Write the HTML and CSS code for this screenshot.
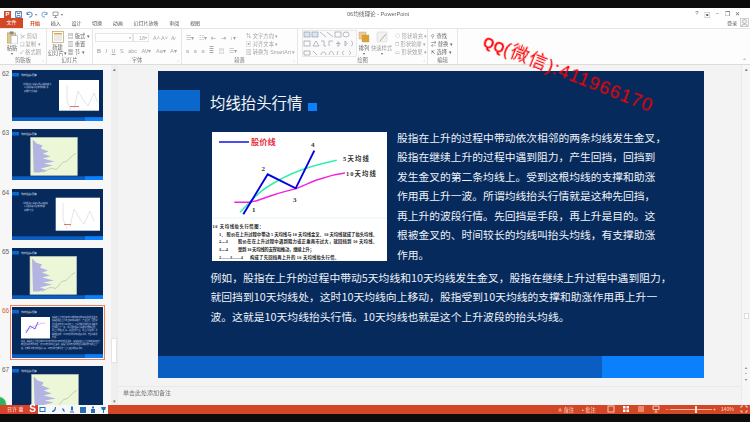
FILE: index.html
```html
<!DOCTYPE html>
<html lang="zh-CN">
<head>
<meta charset="utf-8">
<title>06均线理论 - PowerPoint</title>
<link rel="stylesheet" href="styles.css">
</head>
<body>
<svg class="defs" width="0" height="0">
  <defs>
    <g id="base">
      <rect width="91" height="51" fill="#072a5c"/>
      <rect y="3" width="7" height="3.5" fill="#0a68cc"/>
      <rect y="47.3" width="91" height="3.7" fill="#0a5ec2"/>
      <rect x="73" y="47.3" width="18" height="3.7" fill="#0a80fb"/>
      <text x="9" y="6" class="th-title">均线抬头行情</text>
      <rect x="20.5" y="4.6" width="1" height="1" fill="#0a80fb"/>
    </g>
    <g id="fan">
      <rect width="46.6" height="38" fill="#ecf7d8" stroke="#c4c4c4" stroke-width=".6"/>
      <path d="M2 2 3 35 9 35 16 33 10 31 22 28 13 26 24 24 12 21 20 19 12 16 18 14 10 11 12 8 6 6Z" fill="#b4b4e2"/>
      <path d="M12 35 20 31 26 32 32 25 36 24 42 18 45 16" fill="none" stroke="#b4bcaa" stroke-width=".7"/>
    </g>
    <g id="peaks">
      <path d="M5 4V20L9 30M12 28 16 10 22 20 26 25 32 12 36 22" fill="none" stroke="#c8c8c8" stroke-width=".5"/>
    </g>
  </defs>
</svg>

<div class="black"></div>
<div class="window">
  <header class="titlebar">
    <div class="qat">
      <span class="ppt">P</span>
      <svg class="qi" viewBox="0 0 7 7"><path d="M.5.5h6v6h-6zM2 .5v2h3v-2M2 6.5v-2h3v2" fill="none" stroke="#4a6fa5" stroke-width=".8"/></svg>
      <svg class="qi" viewBox="0 0 7 7"><path d="M1 1v2.500h2.500M1.200 3.300A2.500 2.500 0 1 1 3 6" fill="none" stroke="#3b78c4" stroke-width=".9"/></svg>
      <span class="qd">▾</span>
      <svg class="qi" viewBox="0 0 7 7"><path d="M6 1v2.500h-2.500M5.800 3.300A2.500 2.500 0 1 0 4 6" fill="none" stroke="#6b9bc9" stroke-width=".9"/></svg>
      <svg class="qi" viewBox="0 0 7 7"><path d="M1 1h5v3.500h-5zM3.500 4.500v2M2 6.500h3" fill="none" stroke="#8a8a8a" stroke-width=".8"/></svg>
      <span class="qd">▾</span>
    </div>
    <div class="doc">06均线理论 - PowerPoint</div>
    <div class="winctl"><span>?</span><span>▣</span><span>–</span><span>❐</span><span>✕</span></div>
  </header>
  <nav class="tabs">
    <span class="file">文件</span>
    <span class="tab t1 active">开始</span>
    <span class="tab">插入</span>
    <span class="tab">设计</span>
    <span class="tab">切换</span>
    <span class="tab">动画</span>
    <span class="tab">幻灯片放映</span>
    <span class="tab">审阅</span>
    <span class="tab">视图</span>
    <span class="login">登录</span>
    <svg class="avatar" viewBox="0 0 9 9"><rect x=".5" y=".5" width="8" height="8" fill="#f4f4f4" stroke="#aaa" stroke-width=".5"/><path d="M1.500 8.500c0-3 6-3 6 0M4.500 1.500a1.800 2 0 1 0 .01 0" fill="none" stroke="#888" stroke-width=".6"/></svg>
  </nav>

  <section class="ribbon">
    <div class="grp g-clip">
      <div class="grp-body">
        <div class="big">
          <svg class="bigicon" viewBox="0 0 12 14"><rect x="1" y="2" width="9" height="11" fill="#e0c98c" stroke="#a98b4a" stroke-width=".5"/><rect x="3.500" y=".5" width="4" height="3" fill="#888"/><rect x="5" y="5" width="7" height="9" fill="#fff" stroke="#7a9cc6" stroke-width=".5"/></svg>
          <span>粘贴</span><span class="dd">▾</span>
        </div>
        <div class="rows">
          <span class="muted">✂ 剪切</span>
          <span class="muted">❏ 复制 ▾</span>
          <span class="muted">✓ 格式刷</span>
        </div>
      </div>
      <div class="grp-label">剪贴板<i>⌟</i></div>
    </div>
    <div class="grp g-slides">
      <div class="grp-body">
        <div class="big big-new">
          <svg class="bigicon" viewBox="0 0 12 12"><rect x=".5" y=".5" width="11" height="11" fill="#fff" stroke="#b58d3c" stroke-width=".6"/><rect x="2" y="2" width="8" height="1.500" fill="#d8a94e"/><path d="M2 5h8M2 7h8M2 9h8" stroke="#bbb" stroke-width=".6"/></svg>
          <span>新建</span><span>幻灯片▾</span>
        </div>
        <div class="rows rows-slide">
          <span>▤ 版式 ▾</span>
          <span>▥ 重置</span>
          <span>▦ 节 ▾</span>
        </div>
      </div>
      <div class="grp-label">幻灯片</div>
    </div>
    <div class="grp g-font">
      <div class="grp-body col">
        <div class="line">
          <span class="box fontbox"><i>▾</i></span><span class="box sizebox">18 <i>▾</i></span>
          <span class="muted glyphs">A˄ A˅ &nbsp;A̷</span>
        </div>
        <div class="line muted glyphs"><b>B</b><em>I</em><u>U</u><span>S</span><span>abc</span><span>AV▾</span><span>Aa▾</span><span>A▾</span></div>
      </div>
      <div class="grp-label">字体<i>⌟</i></div>
    </div>
    <div class="grp g-para">
      <div class="grp-body">
        <div class="col pcol">
          <div class="line muted glyphs"><span>☰▾</span><span>☷▾</span><span>⇤</span><span>⇥</span><span>↕▾</span></div>
          <div class="line muted glyphs"><span>≡</span><span>≡</span><span>≡</span><span>≣</span><span>▤</span><span>☰▾</span></div>
        </div>
        <div class="rows muted">
          <span>⇅ 文字方向 ▾</span>
          <span>▣ 对齐文本 ▾</span>
          <span>▧ 转换为 SmartArt ▾</span>
        </div>
      </div>
      <div class="grp-label">段落<i>⌟</i></div>
    </div>
    <div class="grp g-draw">
      <div class="grp-body">
        <svg class="gallery" viewBox="0 0 55 27">
          <g fill="none" stroke="#8a8f99" stroke-width=".6">
            <rect x=".5" y=".5" width="54" height="26" fill="#fafafa" stroke="#ddd"/>
            <rect x="2" y="2" width="6" height="5" fill="#dbe6f4"/><rect x="10" y="2" width="6" height="5" fill="#dbe6f4"/>
            <path d="M18 2l6 5M25 2l6 5"/><rect x="33" y="2" width="6" height="5"/><ellipse cx="44" cy="4.500" rx="3" ry="2.500"/>
            <rect x="2" y="11" width="6" height="5"/><path d="M11 16l3-5 3 5zM19 11h3v5h2M27 16v-5h4M34 13.500h4l-2-2v5l2-2M43 11v5l2-2.500zM49 11c2 0 2 5 0 5"/>
            <path d="M2 21h6v4H2zM11 21l4 4M19 25c0-4 5-4 5 0M27 25c1-5 3-5 5 0M36 21l-1 4M42 21c-2 1-2 3 0 4M47 21c2 1 2 3 0 4"/>
          </g>
        </svg>
        <div class="big bignarrow">
          <svg class="bigicon short" viewBox="0 0 12 12"><rect x="1" y="1" width="7" height="7" fill="#eccf8d" stroke="#b98" stroke-width=".4"/><rect x="4" y="4" width="7" height="7" fill="#e0a030" stroke="#b98" stroke-width=".4"/></svg>
          <span>排列</span><span class="dd">▾</span>
        </div>
        <div class="big bignarrow2">
          <svg class="bigicon short" viewBox="0 0 12 12"><rect x="1" y="1" width="10" height="10" rx="1" fill="#f2f2f2" stroke="#ccc" stroke-width=".5"/><path d="M4 10 10 3" stroke="#aaa"/></svg>
          <span class="muted">快速样式</span><span class="dd">▾</span>
        </div>
        <div class="rows muted rows-shape">
          <span>◇ 形状填充 ▾</span>
          <span>☐ 形状轮廓 ▾</span>
          <span>▭ 形状效果 ▾</span>
        </div>
      </div>
      <div class="grp-label">绘图<i>⌟</i></div>
    </div>
    <div class="grp g-edit">
      <div class="grp-body">
        <div class="rows">
          <span>⚲ 查找</span>
          <span>⇄ 替换 ▾</span>
          <span>⇱ 选择 ▾</span>
        </div>
      </div>
      <div class="grp-label">编辑</div>
    </div>
    <div class="collapse">⌃</div>
  </section>

  <main class="work">
    <aside class="pane">
      <div class="thumbs">
        <div class="thumb"><span class="num">62</span>
          <svg class="mini" viewBox="0 0 91 51"><use href="#base"/><g class="ttxt"><text x="11" y="14.500">均线抬头行情指标的运用说明文字</text><text x="12" y="18">以及相关股价走势的简要分析</text><text x="12" y="21.500">和操作方法说明</text></g><rect x="47" y="10" width="40" height="30.700" fill="#fff"/><g transform="translate(50 11)"><use href="#peaks"/></g><rect x="58" y="36" width="9" height="1" fill="#d77"/></svg>
        </div>
        <div class="thumb"><span class="num">63</span>
          <svg class="mini" viewBox="0 0 91 51"><use href="#base"/><g transform="translate(18.700 8.400)"><use href="#fan"/></g></svg>
        </div>
        <div class="thumb"><span class="num">64</span>
          <svg class="mini" viewBox="0 0 91 51"><use href="#base"/><g class="ttxt"><text x="11" y="14.500">均线抬头行情指标的运用说明</text><text x="12" y="18">以及相关股价走势的简要</text><text x="12" y="21.500">和操作方法</text></g><rect x="43.700" y="8.700" width="44.300" height="33" fill="#fff"/><g transform="translate(46 10)"><use href="#peaks"/></g><rect x="52" y="35" width="7" height="1" fill="#d77"/></svg>
        </div>
        <div class="thumb"><span class="num">65</span>
          <svg class="mini" viewBox="0 0 91 51"><use href="#base"/><g transform="translate(18 8.400)"><use href="#fan"/></g></svg>
        </div>
        <div class="thumb selected"><span class="num">66</span>
          <svg class="mini" viewBox="0 0 91 51"><use href="#base"/><rect x="9" y="10" width="29" height="21.500" fill="#fff"/><path d="M14 26 18 19 23 22 26 15" fill="none" stroke="#00f" stroke-width=".6"/><path d="M13 24c6-3 14-8 20-8" fill="none" stroke="#d3d" stroke-width=".4"/><g class="ttxt"><text x="40" y="11">股指在上升的过程中带动依次相邻的两条均线发生金叉，</text><text x="40" y="14.300">股指在继续上升的过程中遇到阻力，产生回挡，回挡到</text><text x="40" y="17.600">发生金叉的第二条均线上。受到这根均线的支撑和助涨</text><text x="40" y="20.900">作用再上升一波。所谓均线抬头行情就是这种先回挡，</text><text x="40" y="24.200">再上升的波段行情。先回挡是手段，再上升是目的。这</text><text x="40" y="27.500">根被金叉的、时间较长的均线叫抬头均线，有支撑助涨</text><text x="40" y="30.800">作用。</text><text x="9" y="35">例如，股指在上升的过程中带动5天均线和10天均线发生金叉，股指在继续上升过程中遇到阻力，</text><text x="9" y="38.300">就回挡到10天均线处，这时10天均线向上移动，股指受到10天均线的支撑和助涨作用再上升一</text><text x="9" y="41.600">波。这就是10天均线抬头行情。10天均线也就是这个上升波段的抬头均线。</text></g></svg>
        </div>
        <div class="thumb"><span class="num">67</span>
          <svg class="mini" viewBox="0 0 91 51"><use href="#base"/><g transform="translate(19.700 8.400)"><use href="#fan"/></g></svg>
        </div>
      </div>
      <div class="pscroll">
        <span class="sarrow">▴</span>
        <span class="sthumb"></span>
        <span class="sarrow">▾</span>
      </div>
    </aside>

    <div class="editor">
      <div class="canvas">
        <article class="slide">
          <div class="s-head">
            <span class="s-tag"></span>
            <h1 class="s-title">均线抬头行情</h1>
            <span class="s-dot"></span>
          </div>
          <div class="s-row">
            <figure class="chart">
              <svg class="chart-svg" viewBox="0 0 175 129">
                <rect width="175" height="129" fill="#fff"/>
                <path d="M0 86H175" stroke="#e0f6f4" stroke-width="1"/>
                <path d="M7 10H37" stroke="#0000e0" stroke-width="1.400"/>
                <text x="39" y="12.500" class="c-red">股价线</text>
                <path d="M28 80.300C38 70 46 60 56 54.500 68 47 78 42 88 38.500 100 34 112 31 124.700 28.300" fill="none" stroke="#33f0a8" stroke-width="1.500"/>
                <path d="M22.300 70.300H38C46 69 54 65 61.300 63 70 60 76 59 84.700 56.300 94 53 100 49 108 47 116 44 124 42 133 41" fill="none" stroke="#f022e0" stroke-width="1.400"/>
                <path d="M31.300 82.300 55.700 42.300 83.700 56.300 102.300 18.700" fill="none" stroke="#0000e6" stroke-width="1.900"/>
                <g class="c-lab">
                  <text x="99" y="15">4</text><text x="49.500" y="39">2</text><text x="81" y="69.500">3</text><text x="40" y="79.500">1</text>
                  <text x="131" y="29" class="c-name" textLength="26">5天均线</text><text x="134" y="44" class="c-name" textLength="30">10天均线</text>
                </g>
                <g class="c-note">
                  <text x=".5" y="95.500" textLength="51">10 天均线抬头行情图：</text>
                  <text x="7" y="103.500" textLength="158">1、 股价在上升过程中带动 5 天均线与 10 天均线金叉。10 天均线就成了抬头均线。</text>
                  <text x="7" y="111" textLength="9">2——3</text>
                  <text x="26" y="111" textLength="139">股价在在上升过程中遇到阻力或正乘南市过大，就回挡到 10 天均线。</text>
                  <text x="7" y="118.500" textLength="9">3——4</text>
                  <text x="26" y="118.500" textLength="76">受到 10 天均线的支撑和推动，继续上升；</text>
                  <text x="7" y="126.500" textLength="24">2——3——4</text>
                  <text x="38" y="126.500" textLength="89">构成了先回挡再上升的 10 天均线抬头行情。</text>
                </g>
              </svg>
            </figure>
            <p class="s-side">股指在上升的过程中带动依次相邻的两条均线发生金叉<span class="cm">，</span><br>股指在继续上升的过程中遇到阻力<span class="cm">，</span>产生回挡<span class="cm">，</span>回挡到<br>发生金叉的第二条均线上。受到这根均线的支撑和助涨<br>作用再上升一波。所谓均线抬头行情就是这种先回挡<span class="cm">，</span><br>再上升的波段行情。先回挡是手段<span class="cm">，</span>再上升是目的。这<br>根被金叉的、时间较长的均线叫抬头均线<span class="cm">，</span>有支撑助涨<br>作用。</p>
          </div>
          <p class="s-para">例如<span class="cm">，</span>股指在上升的过程中带动5天均线和10天均线发生金叉<span class="cm">，</span>股指在继续上升过程中遇到阻力<span class="cm">，</span><br>就回挡到10天均线处<span class="cm">，</span>这时10天均线向上移动<span class="cm">，</span>股指受到10天均线的支撑和助涨作用再上升一<br>波。这就是10天均线抬头行情。10天均线也就是这个上升波段的抬头均线。</p>
          <div class="s-foot"><span class="s-foot-b"></span></div>
        </article>
      </div>
      <div class="notes">单击此处添加备注</div>
    </div>

    <div class="rscroll">
      <span class="sarrow">▴</span>
      <span class="rthumb"></span>
      <span class="rbtns">▴<br>▪<br>▾</span>
    </div>
  </main>

  <footer class="status">
    <span>≜ 备注</span>
    <span class="st-gap">▪ 批注</span>
    <svg class="st-ic first" viewBox="0 0 8 8"><rect x="1" y="1" width="6" height="6" fill="none" stroke="#f4c9b8"/></svg>
    <svg class="st-ic" viewBox="0 0 8 8"><path d="M1 1h2.500v2.500H1zM4.500 1H7v2.500H4.500zM1 4.500h2.500V7H1zM4.500 4.500H7V7H4.500z" fill="#fff"/></svg>
    <svg class="st-ic" viewBox="0 0 8 8"><rect x="1" y="1" width="6" height="6" fill="#e88a6c"/></svg>
    <svg class="st-ic" viewBox="0 0 8 8"><path d="M1 1h6v3.500H1zM4 4.500V7M2.500 7h3" fill="none" stroke="#f4c9b8"/></svg>
    <span class="slider"><i>–</i><span class="track"><b></b></span><i>+</i></span>
    <span class="zoom">140%</span>
    <svg class="st-ic fit" viewBox="0 0 8 8"><path d="M1 3V1h2M5 1h2v2M7 5v2H5M3 7H1V5" fill="none" stroke="#f4c9b8"/></svg>
  </footer>
</div>
<div class="black"></div>

<div class="watermark"><b class="wm-q">QQ</b>(微信):411966170</div>
<div class="ime">
  <span class="ime-ball"></span>
  <span class="ime-red">日许 重 <b>S</b></span>
  <span class="ime-tools">
    <svg viewBox="0 0 70 8"><g fill="#2a6fb5"><rect x="2" y="1.500" width="5" height="4" fill="none" stroke="#2a6fb5"/><path d="M14 6c3 0 4-2 4-5l-1 0c0 2-1 3-3 4zM24 2l2 1 1 3-2-1zM33 .5h2v4h-2zM32 5.500h4v1h-4zM42 1h6v6h-6zM53 3h4v4h-4zM54 .5h2v2h-2zM63 1h5l-1 3h-1v3h-1V4h-1z"/></g></svg>
  </span>
</div>
</body>
</html>
```

FILE: styles.css
```css
* { box-sizing: border-box; }
html, body { margin: 0; padding: 0; }
body {
  width: 750px;
  height: 422px;
  overflow: hidden;
  position: relative;
  display: flex;
  flex-direction: column;
  background: #0c0c0c;
  font-family: "Liberation Sans", "Noto Sans CJK SC", sans-serif;
  color: #444;
}
.defs { position: absolute; }
.black { height: 8px; flex: none; background: #0c0c0c; }
.window { flex: none; height: 405.500px; display: flex; flex-direction: column; background: #f3f3f3; }

/* title bar */
.titlebar { height: 10px; flex: none; display: flex; align-items: center; padding: 2px 4px 0; background: #fff; position: relative; filter: blur(.25px); }
.qat { display: flex; align-items: center; gap: 4px; width: 340px; }
.ppt { width: 7px; height: 7px; background: #d24726; color: #fff; font-size: 6px; line-height: 7px; text-align: center; font-weight: bold; }
.qi { width: 7px; height: 7px; }
.qd { font-size: 4px; color: #777; margin-left: -2px; }
.doc { width: 340px; font-size: 5.600px; color: #666; padding-left: 3px; }
.winctl { display: flex; gap: 5.500px; font-size: 6px; color: #666; margin-left: -10px; width: 66px; justify-content: flex-end; }

/* tabs */
.tabs { height: 9.500px; flex: none; display: flex; align-items: center; background: #fff; font-size: 5px; color: #555; position: relative; }
.file { width: 23px; height: 9.500px; line-height: 9.500px; text-align: center; background: #d24726; color: #fff; }
.tab { margin-left: 10.700px; white-space: nowrap; filter: blur(.25px); }
.tab.t1 { margin-left: 7px; }
.active { color: #d24726; font-weight: bold; }
.login { margin-left: auto; margin-right: 3px; }
.avatar { width: 9px; height: 9px; margin-right: 1px; }

/* ribbon */
.ribbon { height: 37px; flex: none; display: flex; background: #fdfdfd; border-top: 1px solid #e6e6e6; border-bottom: 1px solid #dcdcdc; font-size: 5.300px; color: #666; position: relative; filter: blur(.35px); }
.grp { display: flex; flex-direction: column; border-right: 1px solid #e6e6e6; flex: none; position: relative; }
.grp-body { flex: 1; display: flex; min-height: 0; }
.grp-label { height: 8px; line-height: 8px; text-align: center; color: #777; position: relative; }
.grp-label i { position: absolute; right: 2px; top: 0; font-style: normal; font-size: 4px; color: #aaa; }
.g-clip { width: 47px; }
.g-slides { width: 46px; }
.g-font { width: 89px; }
.g-para { width: 116px; }
.g-draw { width: 130px; }
.g-edit { width: 30px; }
.big { display: flex; flex-direction: column; align-items: center; line-height: 6px; padding: 2px 0 0 4px; width: 20px; white-space: nowrap; flex: none; }
.big .dd { font-size: 4px; line-height: 5px; }
.big-new { padding-left: 0; width: 21px; }
.bigicon { width: 12px; height: 14px; margin-bottom: 1px; }
.bigicon.short { height: 12px; margin-bottom: 2px; }
.rows { display: flex; flex-direction: column; justify-content: space-between; padding: 3px 0 1px; white-space: nowrap; }
.muted { color: #a4a4a4; }
.col { flex-direction: column; gap: 3px; padding: 4px 2px 0; display: flex; }
.line { display: flex; align-items: center; gap: 4px; height: 10px; white-space: nowrap; }
.glyphs { font-size: 5.500px; }
.box { height: 9px; border: 1px solid #e6e6e6; background: #fff; display: flex; align-items: center; justify-content: flex-end; color: #aaa; padding-right: 1px; }
.box i { font-style: normal; font-size: 4px; }
.fontbox { width: 38px; }
.sizebox { width: 16px; margin-left: -4px; }
.line.glyphs { padding-left: 2px; gap: 4.500px; }
.pcol { width: 64px; flex: none; }
.rows-shape { padding-left: 3px; }
.gallery { width: 55px; height: 27px; margin: 1px 0 0 4px; flex: none; }
.bignarrow { width: 14px; padding-left: 0; }
.bignarrow2 { width: 21px; padding-left: 0; }
.g-edit .rows { padding-left: 3px; }
.collapse { position: absolute; right: 3px; bottom: 0; font-size: 6px; color: #888; }

/* workspace */
.work { flex: 1; min-height: 0; display: flex; background: #f3f3f3; }
.pane { width: 118px; flex: none; display: flex; background: #f7f7f7; border-right: 1px solid #ececec; overflow: hidden; }
.thumbs { width: 111px; padding-top: 5.500px; display: flex; flex-direction: column; gap: 8.250px; flex: none; }
.thumb { flex: none; height: 51px; display: flex; gap: 4px; padding-left: 2px; position: relative; }
.num { font-size: 6.500px; line-height: 7px; width: 6px; color: #666; letter-spacing: -.1px; }
.mini { width: 91px; height: 51px; display: block; flex: none; }
.thumb.selected .mini { outline: 1.500px solid #f0825e; outline-offset: 1px; }
.thumb.selected .num { color: #d9603c; }
.th-title { font-size: 2.600px; fill: #e8eef7; font-family: "Noto Sans CJK SC", sans-serif; }
.ttxt text { font-size: 1.900px; fill: #cfd9e8; font-family: "Noto Sans CJK SC", sans-serif; }
.pscroll { width: 7px; display: flex; flex-direction: column; align-items: center; background: #efefef; position: relative; }
.sarrow { font-size: 5px; line-height: 8px; color: #777; height: 8px; }
.sthumb { width: 6px; height: 25px; margin-top: 265px; background: #fff; border: 1px solid #e4e4e4; }
.pscroll .sarrow:last-child { margin-top: auto; }

.editor { flex: 1; min-width: 0; display: flex; flex-direction: column; }
.canvas { height: 321.500px; flex: none; padding: 6.500px 0 0 40px; }
.slide { width: 546px; height: 307px; background: #072a5c; display: flex; flex-direction: column; font-family: "Noto Sans CJK SC", sans-serif; color: #eef2f8; }
.s-head { display: flex; align-items: flex-end; padding-top: 19px; height: 39.500px; flex: none; }
.s-tag { width: 42px; height: 20.500px; background: #0a68cc; flex: none; }
.s-title { margin: 0 0 0 10px; font-size: 15.400px; line-height: 21px; font-weight: 400; color: #f2f5fa; white-space: nowrap; position: relative; top: 2px; }
.s-dot { width: 9px; height: 8px; margin: 0 0 0 6px; background: #0a80fb; }
.s-row { display: flex; padding: 17px 0 0 54px; flex: none; }
.chart { margin: 4px 0 0; width: 175px; height: 129px; flex: none; }
.chart-svg { display: block; width: 175px; height: 129px; }
.c-red { font-size: 8.200px; font-weight: 700; fill: #e8303a; font-family: "Noto Sans CJK SC", sans-serif; }
.c-lab text { font-size: 7px; fill: #333; font-family: "Liberation Serif", "Noto Sans CJK SC", serif; font-weight: 700; }
.c-lab .c-name { font-size: 6.400px; }
.c-note text { font-size: 4.300px; fill: #222; font-family: "Liberation Serif", "Noto Sans CJK SC", serif; font-weight: 700; }
.s-side { margin: 0 0 0 10px; font-size: 10.780px; line-height: 19.500px; white-space: nowrap; }
.s-para { margin: 3.500px 0 0 52.500px; font-size: 10.780px; line-height: 19.500px; white-space: nowrap; letter-spacing: .04px; }
.cm { font-family: "Noto Sans CJK TC", sans-serif; }
.s-foot { margin-top: auto; height: 22px; background: #0a5ec2; display: flex; justify-content: flex-end; flex: none; }
.s-foot-b { width: 102px; background: #0a80fb; }
.notes { flex: 1; border-top: 1px solid #e9e9e9; font-size: 6px; color: #777; padding: 0 0 0 5px; line-height: 12px; filter: blur(.2px); }
.rscroll { width: 9px; flex: none; display: flex; flex-direction: column; align-items: center; background: #f6f6f6; border-left: 1px solid #ececec; }
.rthumb { width: 5px; height: 6px; background: #fff; border: 1px solid #ddd; margin-top: 240px; }
.rbtns { margin-top: auto; margin-bottom: 22px; font-size: 4px; line-height: 6px; color: #777; text-align: center; }

/* status */
.status { height: 9px; flex: none; display: flex; align-items: center; justify-content: flex-end; background: #d24726; color: #f6cfc0; font-size: 5.200px; padding-right: 2px; filter: blur(.2px); white-space: nowrap; }
.st-gap { margin-left: 8px; }
.st-ic { width: 8px; height: 8px; margin-left: 7px; }
.st-ic.first { margin-left: 11px; }
.slider { display: flex; align-items: center; margin-left: 6px; gap: 1px; width: 50px; }
.slider i { font-style: normal; }
.track { flex: 1; height: 1px; background: #f0b8a2; position: relative; }
.track b { position: absolute; left: 25px; top: -3px; width: 2px; height: 7px; background: #f6dccf; }
.zoom { margin-left: 5px; }
.st-ic.fit { margin-left: 6px; }

/* overlays */
.watermark { position: absolute; left: 484px; top: 29.500px; transform-origin: 0 50%; transform: rotate(21.600deg); font-size: 18.500px; line-height: 20px; letter-spacing: 1px; color: #f00; white-space: nowrap; font-family: "Liberation Sans", "Noto Sans CJK SC", sans-serif; }
.wm-q { font-size: 14px; letter-spacing: 0; }
.ime { position: absolute; left: 0; top: 403px; height: 11px; width: 108px; display: flex; align-items: flex-end; }
.ime-ball { position: absolute; left: -10px; top: -7px; width: 17px; height: 17px; border-radius: 50%; background: #28b463; border: 1px solid #c9e8d0; }
.ime-red { width: 38px; height: 9px; background: #d8412a; color: #f8e3da; font-size: 5px; line-height: 9px; padding-left: 7px; white-space: nowrap; position: relative; }
.ime-red b { position: absolute; right: 2px; top: -1px; font-size: 10px; line-height: 10px; color: #fff; }
.ime-tools { width: 70px; height: 9px; background: #f5f7fa; display: block; }
.ime-tools svg { display: block; width: 70px; height: 8px; margin-top: .5px; }
```
